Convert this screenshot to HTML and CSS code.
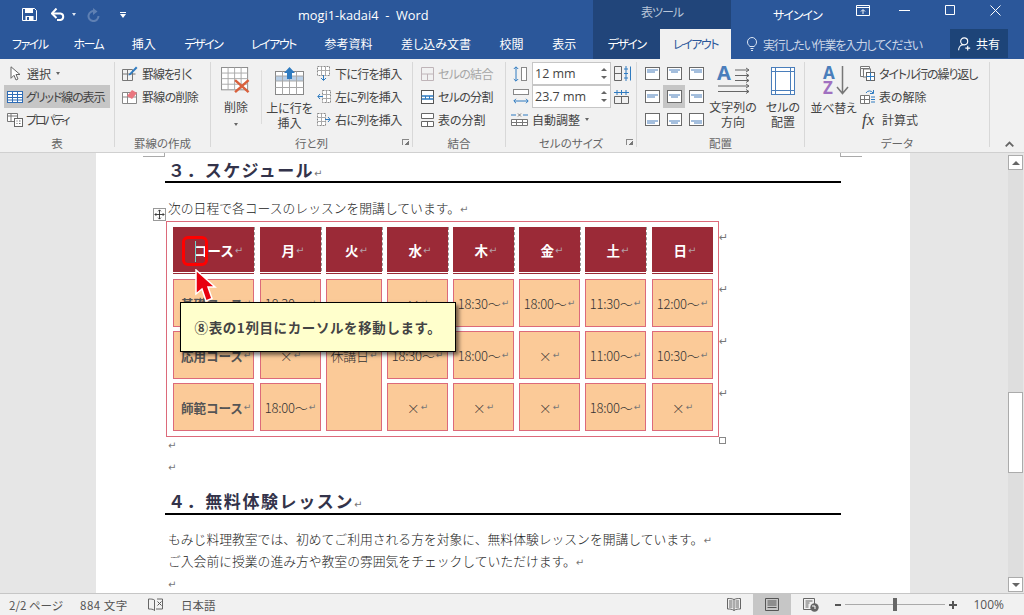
FILE: index.html
```html
<!DOCTYPE html>
<html lang="ja">
<head>
<meta charset="utf-8">
<title>mogi1-kadai4 - Word</title>
<link rel="stylesheet" href="styles.css">
</head>
<body>
<svg class="defs" width="0" height="0">
  <symbol id="al" viewBox="0 0 15 13"><rect x=".5" y=".5" width="14" height="12" fill="#fff" stroke="#6a6a6a"/><path d="M2 3h11M2 5h8" stroke="#4a7ebb" fill="none"/></symbol>
  <symbol id="ac" viewBox="0 0 15 13"><rect x=".5" y=".5" width="14" height="12" fill="#fff" stroke="#6a6a6a"/><path d="M2 3h11M4 5h7" stroke="#4a7ebb" fill="none"/></symbol>
  <symbol id="ar" viewBox="0 0 15 13"><rect x=".5" y=".5" width="14" height="12" fill="#fff" stroke="#6a6a6a"/><path d="M2 3h11M5 5h8" stroke="#4a7ebb" fill="none"/></symbol>
  <symbol id="ml" viewBox="0 0 15 13"><rect x=".5" y=".5" width="14" height="12" fill="#fff" stroke="#6a6a6a"/><path d="M2 5h11M2 7h8" stroke="#4a7ebb" fill="none"/></symbol>
  <symbol id="mc" viewBox="0 0 15 13"><rect x=".5" y=".5" width="14" height="12" fill="#fff" stroke="#6a6a6a"/><path d="M2 5h11M4 7h7" stroke="#4a7ebb" fill="none"/></symbol>
  <symbol id="mr" viewBox="0 0 15 13"><rect x=".5" y=".5" width="14" height="12" fill="#fff" stroke="#6a6a6a"/><path d="M2 5h11M5 7h8" stroke="#4a7ebb" fill="none"/></symbol>
  <symbol id="bl" viewBox="0 0 15 13"><rect x=".5" y=".5" width="14" height="12" fill="#fff" stroke="#6a6a6a"/><path d="M2 8h11M2 10h8" stroke="#4a7ebb" fill="none"/></symbol>
  <symbol id="bc" viewBox="0 0 15 13"><rect x=".5" y=".5" width="14" height="12" fill="#fff" stroke="#6a6a6a"/><path d="M2 8h11M4 10h7" stroke="#4a7ebb" fill="none"/></symbol>
  <symbol id="br" viewBox="0 0 15 13"><rect x=".5" y=".5" width="14" height="12" fill="#fff" stroke="#6a6a6a"/><path d="M2 8h11M5 10h8" stroke="#4a7ebb" fill="none"/></symbol>
</svg>

<div class="app">
  <header class="titlebar">
    <div class="qat">
      <svg class="q-save" width="15" height="13" viewBox="0 0 15 13"><path d="M.5.5h12l2 2v10H.5z" fill="none" stroke="#fff"/><path d="M3 1h8v4H3zM3.500 8h8v4.500h-8z" fill="#fff"/><path d="M5 9h2v3H5z" fill="#2b579a"/></svg>
      <svg class="q-undo" width="16" height="13" viewBox="0 0 16 13"><path d="M1 5.500h8.500a3.300 3.300 0 0 1 0 6.500H6" fill="none" stroke="#fff" stroke-width="2"/><path d="M5.500.5 1 5.500l4.500 4.500" fill="none" stroke="#fff" stroke-width="2"/></svg>
      <span class="q-arrow"></span>
      <svg class="q-redo" width="14" height="14" viewBox="0 0 14 14"><path d="M9 3.300a5 5 0 1 0 3.500 4.700" fill="none" stroke="#5f80b3" stroke-width="2"/><path d="M7 0v7l4.500-3.500z" fill="#5f80b3"/></svg>
      <svg class="q-custom" width="6" height="6" viewBox="0 0 6 6"><path d="M0 0h6v1H0zM0 2h6L3 6z" fill="#fff"/></svg>
    </div>
    <div class="doc-title">mogi1-kadai4&nbsp; - &nbsp;Word</div>
    <div class="tool-ctx">表ツール</div>
    <div class="signin">サインイン</div>
    <div class="winbtns">
      <svg width="14" height="11" viewBox="0 0 14 11"><path d="M.5.5h13v10H.5z" fill="none" stroke="#fff"/><path d="M.5 2.500h13" stroke="#fff"/><path d="M7 9V5M5 6.500 7 4.500l2 2" stroke="#fff" fill="none"/></svg>
      <svg width="11" height="11" viewBox="0 0 11 11"><path d="M0 5.500h11" stroke="#fff"/></svg>
      <svg width="10" height="10" viewBox="0 0 10 10"><path d="M.5.500h9v9h-9z" fill="none" stroke="#fff"/></svg>
      <svg width="11" height="11" viewBox="0 0 11 11"><path d="M.5.500l10 10M10.500.500l-10 10" stroke="#fff" fill="none"/></svg>
    </div>
  </header>

  <nav class="tabs">
    <span class="tab kana">ファイル</span><span class="tab kana">ホーム</span><span class="tab">挿入</span><span class="tab kana">デザイン</span><span class="tab kana">レイアウト</span><span class="tab">参考資料</span><span class="tab">差し込み文書</span><span class="tab">校閲</span><span class="tab">表示</span>
    <span class="tab kana tab-ctx">デザイン</span><span class="tab kana tab-on">レイアウト</span>
    <div class="tell">
      <svg width="10" height="14" viewBox="0 0 10 14"><path d="M3 9.500C1 8 .5 6.500.5 5a4.500 4.500 0 0 1 9 0c0 1.500-.5 3-2.500 4.500zM3.500 11.500h3M4 13.500h2" fill="none" stroke="#dce6f4"/></svg>
      <span>実行したい作業を入力してください</span>
    </div>
    <div class="share">
      <svg width="15" height="16" viewBox="0 0 17 16"><circle cx="7" cy="5" r="4" fill="none" stroke="#fff" stroke-width="1.300"/><path d="M.7 15c0-3.500 2.500-6 5-6.300M11 10v5.500M8.300 12.700h5.500" fill="none" stroke="#fff" stroke-width="1.300"/></svg>
      <span>共有</span>
    </div>
  </nav>

  <section class="ribbon">
    <div class="group g-table">
      <div class="g-body rows">
        <div class="item"><svg width="11" height="15" viewBox="0 0 11 15"><path d="M1 .8v11.500l3-3 2 4.700 2-1-2-4.500h4z" fill="#fff" stroke="#666"/></svg><span>選択</span><i class="caret"></i></div>
        <div class="item item-on"><svg width="16" height="12" viewBox="0 0 16 12"><rect x=".5" y=".5" width="15" height="11" fill="#fff" stroke="#2f6cb5"/><path d="M.5 3.500h15M.5 6.500h15M.5 9h15M5.500.5v11M10.500.5v11" stroke="#2f6cb5" fill="none"/></svg><span class="s2">グリッド線の表示</span></div>
        <div class="item"><svg width="16" height="15" viewBox="0 0 16 15"><path d="M.5 1.500h10v8H.5zM.5 4h10M4 1.500v8" fill="#fff" stroke="#777"/><rect x="7.500" y="6.500" width="8" height="8" fill="#fff" stroke="#666"/><path d="M9.500 9h1M12 9h1.500M9.500 11.500h1M12 11.500h1.500" stroke="#666"/></svg><span class="s3">プロパティ</span></div>
      </div>
      <div class="g-label">表</div>
    </div>

    <div class="group g-draw">
      <div class="g-body rows">
        <div class="item"><svg width="16" height="15" viewBox="0 0 16 15"><path d="M.5 3.500h10v11H.5zM.5 8h13M5.500 3.500v11" fill="none" stroke="#777"/><path d="M7 8l7-7.500 1.500 1.500L8.500 9 6.500 9.500z" fill="#2f7bc0"/></svg><span class="s2">罫線を引く</span></div>
        <div class="item"><svg width="16" height="15" viewBox="0 0 16 15"><path d="M.5 3.500h14v11H.5zM.5 8h14M5.500 3.500v11" fill="#fff" stroke="#888"/><path d="M5 7l5-6 5 3-5 6z" fill="#e9767f"/></svg><span class="s1">罫線の削除</span></div>
      </div>
      <div class="g-label">罫線の作成</div>
    </div>

    <div class="group g-rows">
      <div class="g-body g-rows-body">
        <div class="big b-del">
          <svg width="32" height="27" viewBox="0 0 32 29"><rect x=".5" y=".5" width="28" height="24" fill="#fff" stroke="#888"/><path d="M.5 6.500h28M.5 12.500h28M.5 18.500h28M7.500.5v24M14.500.5v24M21.500.5v24" stroke="#a8a8a8" fill="none"/><path d="M15 14l14.500 13M29.500 14 15 27" stroke="#d9603c" stroke-width="2.600" fill="none"/></svg>
          <span>削除</span><i class="caret c-big"></i>
        </div>
        <div class="vsep"></div>
        <div class="big b-ins">
          <svg width="30" height="28" viewBox="0 0 30 28"><rect x=".5" y="4.500" width="28" height="23" fill="#fff" stroke="#888"/><rect x="1" y="9" width="27" height="5" fill="#b9cfe6"/><path d="M.5 9h28M.5 14h28M.5 20.500h28M7.500 4.500v23M14.500 4.500v23M21.500 4.500v23" stroke="#a8a8a8" fill="none"/><path d="M14.500 0 20 6h-3v6h-5V6H9z" fill="#2f7bc0"/></svg>
          <span class="s0">上に行を<br>挿入</span>
        </div>
        <div class="rows r-ins">
          <div class="item"><svg width="14" height="15" viewBox="0 0 14 15"><rect x=".5" y=".5" width="12" height="9" fill="#fff" stroke="#888" stroke-dasharray="2 1"/><path d="M.5 4.500h12M4.500.5v9M8.500.5v9" stroke="#aaa"/><path d="M6.500 9v5M4 12l2.500 2.500L9 12" stroke="#2f7bc0" fill="none"/></svg><span class="s1">下に行を挿入</span></div>
          <div class="item"><svg width="14" height="15" viewBox="0 0 14 15"><rect x="5.500" y="1.500" width="8" height="12" fill="#fff" stroke="#888" stroke-dasharray="2 1"/><path d="M5.500 5.500h8M5.500 9.500h8M9.500 1.500v12" stroke="#aaa"/><path d="M6 7.500H1M3 5 .8 7.500 3 10" stroke="#2f7bc0" fill="none"/></svg><span class="s1">左に列を挿入</span></div>
          <div class="item"><svg width="14" height="15" viewBox="0 0 14 15"><rect x=".5" y="1.500" width="8" height="12" fill="#fff" stroke="#888" stroke-dasharray="2 1"/><path d="M.5 5.500h8M.5 9.500h8M4.500 1.500v12" stroke="#aaa"/><path d="M8 7.500h5M11 5l2.200 2.500L11 10" stroke="#2f7bc0" fill="none"/></svg><span class="s1">右に列を挿入</span></div>
        </div>
      </div>
      <div class="g-label">行と列</div>
      <i class="launcher"></i>
    </div>

    <div class="group g-merge">
      <div class="g-body rows">
        <div class="item off"><svg width="13" height="14" viewBox="0 0 13 14"><path d="M.5.500h12v13H.5zM.5 7h12M6.500 7v6.500" fill="none" stroke="#bfb4b8"/></svg><span class="s1">セルの結合</span></div>
        <div class="item"><svg width="13" height="14" viewBox="0 0 13 14"><rect x=".5" y=".5" width="12" height="13" fill="#fff" stroke="#555"/><path d="M.5 6h12M.5 9h12" stroke="#2f7bc0" stroke-width="1.500"/><path d="M4.500 6v3M8.500 6v3" stroke="#2f7bc0"/></svg><span class="s1">セルの分割</span></div>
        <div class="item"><svg width="13" height="14" viewBox="0 0 13 14"><path d="M.5.500h12v5H.5zM.5 8.500h12v5H.5zM6.500 8.500v5" fill="#fff" stroke="#666"/></svg><span>表の分割</span></div>
      </div>
      <div class="g-label">結合</div>
    </div>

    <div class="group g-size">
      <div class="g-body rows">
        <div class="size-row">
          <svg width="16" height="16" viewBox="0 0 16 16"><path d="M3 1v14M.8 3 3 .8 5.200 3M.8 13 3 15.200 5.200 13" stroke="#2f7bc0" fill="none"/><rect x="8.500" y="1.500" width="5" height="13" fill="#fff" stroke="#888"/></svg>
          <div class="spin"><span>12 mm</span><b class="sp"><i class="up"></i><i class="dn"></i></b></div>
          <svg width="17" height="15" viewBox="0 0 17 15"><path d="M.5.500h7v14h-7zM.5 7.500h7" fill="none" stroke="#666"/><path d="M12 0v15M10 3h4M10 7.500h4M10 12h4M16.500.5v14" fill="none" stroke="#2f7bc0"/></svg>
        </div>
        <div class="size-row">
          <svg width="16" height="16" viewBox="0 0 16 16"><rect x=".5" y=".5" width="15" height="5" fill="#fff" stroke="#888"/><path d="M1 12h14M3 9.800.8 12 3 14.200M13 9.800 15.200 12 13 14.200" stroke="#2f7bc0" fill="none"/></svg>
          <div class="spin"><span>23.7 mm</span><b class="sp"><i class="up"></i><i class="dn"></i></b></div>
          <svg width="17" height="15" viewBox="0 0 17 15"><path d="M.5 7.500h14v7H.5zM7.500 7.500v7" fill="none" stroke="#666"/><path d="M0 3.500h15M3 1v5M7.500 1v5M12 1v5" fill="none" stroke="#2f7bc0"/></svg>
        </div>
        <div class="item i-auto"><svg width="17" height="13" viewBox="0 0 17 13"><path d="M0 2h5M12 2h5" stroke="#2f7bc0"/><path d="M7 .5l3 3M10 .5l-3 3" stroke="#777"/><path d="M.5 6.500h16v6H.5zM.5 9.500h16M5.500 6.500v6M11.500 6.500v6" fill="#fff" stroke="#777"/></svg><span>自動調整</span><i class="caret"></i></div>
      </div>
      <div class="g-label">セルのサイズ</div>
      <i class="launcher"></i>
    </div>

    <div class="group g-align">
      <div class="g-body g-align-body">
        <div class="aligns">
          <span class="al"><svg width="15" height="13"><use href="#al"/></svg></span><span class="al"><svg width="15" height="13"><use href="#ac"/></svg></span><span class="al"><svg width="15" height="13"><use href="#ar"/></svg></span>
          <span class="al"><svg width="15" height="13"><use href="#ml"/></svg></span><span class="al al-on"><svg width="15" height="13"><use href="#mc"/></svg></span><span class="al"><svg width="15" height="13"><use href="#mr"/></svg></span>
          <span class="al"><svg width="15" height="13"><use href="#bl"/></svg></span><span class="al"><svg width="15" height="13"><use href="#bc"/></svg></span><span class="al"><svg width="15" height="13"><use href="#br"/></svg></span>
        </div>
        <div class="big b-dir">
          <svg class="has-text" width="33" height="28" viewBox="0 0 33 28"><text x="0" y="15" class="svg-a">A</text><path d="M18 5h14M18 10.500h14M18 15.500h14M1 21h31M1 26.500h31M29 3l3 2-3 2M29 8.500l3 2-3 2M29 13.500l3 2-3 2M29 19l3 2-3 2M29 24.500l3 2-3 2" stroke="#666" fill="none"/></svg>
          <span>文字列の<br>方向</span>
        </div>
        <div class="big b-cell">
          <svg width="24" height="28" viewBox="0 0 24 28"><rect x=".5" y=".5" width="23" height="27" fill="#fff" stroke="#4a7ebb"/><path d="M4.500.5v27M19.500.5v27M.5 4.500h23M.5 23.500h23" stroke="#4a7ebb" fill="none"/></svg>
          <span>セルの<br>配置</span>
        </div>
      </div>
      <div class="g-label">配置</div>
    </div>

    <div class="group g-data">
      <div class="g-body g-data-body">
        <div class="big b-sort">
          <svg class="has-text" width="25" height="29" viewBox="0 0 25 29"><text x="0" y="13" class="svg-az1">A</text><text x="0" y="28" class="svg-az2">Z</text><path d="M19.500 0v27M14 21l5.500 6.500L25 21" stroke="#777" stroke-width="1.500" fill="none"/></svg>
          <span>並べ替え</span>
        </div>
        <div class="rows r-data">
          <div class="item"><svg width="15" height="15" viewBox="0 0 15 15"><path d="M.5.500h9v2h-9zM.5 2.500v8h3" fill="#fff" stroke="#777"/><rect x="3.500" y="3" width="7" height="8" fill="#fff" stroke="#777"/><rect x="6.500" y="6.500" width="8" height="8" fill="#fff" stroke="#666"/><path d="M6.500 10.500h8M10.500 6.500v8" stroke="#2f7bc0"/></svg><span class="s2">タイトル行の繰り返し</span></div>
          <div class="item"><svg width="15" height="15" viewBox="0 0 15 15"><path d="M.5 6.500h9v8h-9zM.5 10.500h9M4.500 6.500v8" fill="#fff" stroke="#777"/><path d="M11 8h4M11 10.500h4M11 13h4M6 4a4 4 0 0 1 7 0M13.500 1v3.500H10" stroke="#2f7bc0" fill="none"/></svg><span>表の解除</span></div>
          <div class="item"><span class="fx">fx</span><span>計算式</span></div>
        </div>
      </div>
      <div class="g-label">データ</div>
    </div>

    <svg class="collapse" width="9" height="6" viewBox="0 0 9 6"><path d="M.7 5.300 4.500 1.500l3.800 3.800" fill="none" stroke="#666" stroke-width="1.800"/></svg>
  </section>

  <main class="workspace">
    <div class="doc-scroll">
      <article class="page">
        <i class="crop crop-l"></i><i class="crop crop-r"></i>
        <h2 class="h">３．スケジュール<i class="rt">↵</i></h2>
        <p class="para first">次の日程で各コースのレッスンを開講しています。<i class="rt">↵</i></p>

        <div class="tbl-wrap">
          <div class="move"><svg width="11" height="11" viewBox="0 0 12 12"><path d="M6 1v10M1 6h10M4.500 2.500 6 1l1.500 1.500M4.500 9.500 6 11l1.500-1.500M2.500 4.500 1 6l1.500 1.500M9.500 4.500 11 6 9.500 7.500" stroke="#333" fill="none"/></svg></div>
          <div class="tbl">
            <div class="th c1">コース<i class="rt">↵</i></div>
            <div class="th">月<i class="rt">↵</i></div>
            <div class="th">火<i class="rt">↵</i></div>
            <div class="th">水<i class="rt">↵</i></div>
            <div class="th">木<i class="rt">↵</i></div>
            <div class="th">金<i class="rt">↵</i></div>
            <div class="th c7">土<i class="rt">↵</i></div>
            <div class="th last">日<i class="rt">↵</i></div>

            <div class="td c1 name">基礎コース<i class="rt">↵</i></div>
            <div class="td">18:30～<i class="rt">↵</i></div>
            <div class="td off">休講日<i class="rt">↵</i></div>
            <div class="td">×<i class="rt">↵</i></div>
            <div class="td">18:30～<i class="rt">↵</i></div>
            <div class="td">18:00～<i class="rt">↵</i></div>
            <div class="td c7">11:30～<i class="rt">↵</i></div>
            <div class="td">12:00～<i class="rt">↵</i></div>

            <div class="td c1 name">応用コース<i class="rt">↵</i></div>
            <div class="td">×<i class="rt">↵</i></div>
            <div class="td">18:30～<i class="rt">↵</i></div>
            <div class="td">18:00～<i class="rt">↵</i></div>
            <div class="td">×<i class="rt">↵</i></div>
            <div class="td c7">11:00～<i class="rt">↵</i></div>
            <div class="td">10:30～<i class="rt">↵</i></div>

            <div class="td c1 name">師範コース<i class="rt">↵</i></div>
            <div class="td">18:00～<i class="rt">↵</i></div>
            <div class="td">×<i class="rt">↵</i></div>
            <div class="td">×<i class="rt">↵</i></div>
            <div class="td">×<i class="rt">↵</i></div>
            <div class="td c7">18:00～<i class="rt">↵</i></div>
            <div class="td">×<i class="rt">↵</i></div>
          </div>
          <div class="row-ends"><i class="rt">↵</i><i class="rt">↵</i><i class="rt">↵</i><i class="rt">↵</i></div>
          <i class="resize"></i>
          <i class="caret-line"></i>
          <div class="hl-box"></div>
          <svg class="pointer" width="22" height="34" viewBox="0 0 22 34"><path d="M1 1v24l6-5 4 12 6-2.500-4-11.500h7z" fill="#e8000f" stroke="#fff" stroke-width="1.500"/></svg>
          <div class="callout">⑧表の1列目にカーソルを移動します。</div>
        </div>

        <p class="para blank"><i class="rt">↵</i></p>
        <p class="para"><i class="rt">↵</i></p>
        <h2 class="h h4">４．無料体験レッスン<i class="rt">↵</i></h2>
        <p class="para first2">もみじ料理教室では、初めてご利用される方を対象に、無料体験レッスンを開講しています。<i class="rt">↵</i></p>
        <p class="para">ご入会前に授業の進み方や教室の雰囲気をチェックしていただけます。<i class="rt">↵</i></p>
        <p class="para"><i class="rt">↵</i></p>
      </article>
    </div>
    <aside class="scrollbar">
      <div class="sb-btn"><i class="tri-up"></i></div>
      <div class="sb-track"><div class="sb-thumb"></div></div>
      <div class="sb-btn"><i class="tri-dn"></i></div>
    </aside>
  </main>

  <footer class="status">
    <span class="st-pg">2/2 ページ</span>
    <span class="st-wc">884 文字</span>
    <svg class="st-book" width="15" height="14" viewBox="0 0 15 14"><path d="M6.500 2C5 1 3 1 .5 1v10c2.500 0 4.500 0 6 1.500zM6.500 2v10.500" fill="none" stroke="#666"/><path d="M9 1h5.500v10H8" fill="none" stroke="#666"/><path d="M9.500 3.500l4 4M13.500 3.500l-4 4" stroke="#555"/></svg>
    <span class="st-lang">日本語</span>
    <div class="st-right">
      <svg class="v-read" width="14" height="13" viewBox="0 0 14 13"><path d="M7 1.500C5 .5 3 .5.500.500v10.500c2.500 0 4.500 0 6.500 1.500 2-1.500 4-1.500 6.500-1.500V.5C11 .5 9 .5 7 1.500zM7 1.500v11M2 3h3.500M2 5h3.500M2 7h3.500M2 9h3.500M8.500 3H12M8.500 5H12M8.500 7H12M8.500 9H12" fill="none" stroke="#666"/></svg>
      <div class="v-print"><svg width="14" height="13" viewBox="0 0 14 13"><path d="M.5.500h13v12H.5zM2.500 3h9M2.500 5h9M2.500 7h9M2.500 9.500h9" fill="none" stroke="#555"/></svg></div>
      <svg class="v-web" width="16" height="14" viewBox="0 0 16 14"><path d="M.5.500h11v11H.5zM2.500 3h7M2.500 5h4M2.500 7h3M2.500 9h3" fill="none" stroke="#666"/><circle cx="11.500" cy="9.500" r="4.200" fill="#666"/><path d="M9 8h3v3" stroke="#fff" fill="none"/></svg>
      <div class="zoom">
        <i class="z-minus"></i>
        <div class="z-track"><i class="z-thumb"></i></div>
        <i class="z-plus"></i>
      </div>
      <span class="z-val">100%</span>
    </div>
  </footer>
</div>
</body>
</html>
```

FILE: styles.css
```css
* { box-sizing: border-box; }
html, body { margin: 0; padding: 0; width: 1024px; height: 615px; overflow: hidden; }
body {
  font-family: "Noto Sans CJK JP", "Noto Sans", sans-serif;
  font-size: 12px;
  color: #444;
  background: #f1f1f1;
}
i { font-style: normal; }
svg { display: block; flex: none; }
.has-text { overflow: visible; }
.defs { position: absolute; }
.app { display: flex; flex-direction: column; height: 615px; }
.s1 { letter-spacing: -.7px; }
.s2 { letter-spacing: -1.100px; }
.s3 { letter-spacing: -2.200px; }

/* title bar */
.titlebar {
  height: 29px; background: #2b579a; color: #fff;
  display: flex; align-items: center; flex: none;
}
.qat { display: flex; align-items: center; width: 298px; padding-left: 22px; height: 22px; flex: none; }
.q-undo { margin-left: 14px; }
.q-arrow { width: 0; height: 0; margin-left: 5px; border: 2.500px solid transparent; border-top: 3px solid #dfe7f3; border-bottom: 0; }
.q-redo { margin-left: 10px; }
.q-custom { margin-left: 20px; }
.doc-title { width: 295px; font-family: "Open Sans", sans-serif; font-size: 12.800px; line-height: 20px; flex: none; }
.tool-ctx {
  width: 138px; height: 29px; flex: none; background: #21457a; color: #b8c5d8;
  text-align: center; line-height: 24px; font-feature-settings: "palt"; font-size: 12px; letter-spacing: -1px;
}
.signin { margin-left: 42px; width: 83px; font-size: 12px; font-feature-settings: "palt"; line-height: 20px; letter-spacing: -1px; }
.winbtns { display: flex; align-items: center; margin-top: -9px; }
.winbtns svg:nth-child(1) { margin-right: 29px; margin-left: 0; }
.winbtns svg:nth-child(2) { margin-right: 35px; }
.winbtns svg:nth-child(3) { margin-right: 35px; }

/* tabs */
.tabs { height: 30px; background: #2b579a; display: flex; flex: none; color: #fff; }
.tab {
  padding: 0 14.300px; line-height: 30px; font-size: 12px; white-space: nowrap;
  font-feature-settings: "palt"; flex: none;
}
.tab:first-child { padding-left: 12px; padding-right: 11.500px; }
.kana { letter-spacing: -1.500px; }
.tab-ctx { background: #21457a; margin-left: auto; width: 67px; padding: 0; text-align: center; }
.tab-on { background: #f1f1f1; color: #2b579a; width: 71px; padding: 0; text-align: center; }
.tell {
  display: flex; align-items: center; margin-left: 16px; gap: 6px; width: 203px;
  color: #cbd6e7; font-size: 12px; font-feature-settings: "palt"; white-space: nowrap; flex: none; letter-spacing: -1.250px;
}
.share {
  width: 58px; height: 29px; background: #1d4478; margin-right: 16px; flex: none;
  display: flex; align-items: center; justify-content: center; gap: 3px; font-size: 12px;
}

/* ribbon */
.ribbon {
  height: 94px; background: #f1f1f1; border-bottom: 1px solid #d0d0d0;
  display: flex; flex: none; position: relative; padding-top: 3px;
  font-feature-settings: "palt"; white-space: nowrap;
}
.group { display: flex; flex-direction: column; height: 85px; border-right: 1px solid #d8d8d8; position: relative; flex: none; }
.g-body { height: 70px; flex: none; }
.g-label { text-align: center; color: #666; font-size: 11.500px; line-height: 15px; height: 11px; margin-top: 4px; }
.g-table { width: 115px; }
.g-draw { width: 96px; }
.g-rows { width: 202px; }
.g-merge { width: 93px; }
.g-size { width: 131px; }
.g-align { width: 168px; }
.g-data { width: 185px; border-right: 1px solid #d8d8d8; }
.rows { display: flex; flex-direction: column; }
.item { height: 23px; display: flex; align-items: center; font-size: 12px; flex: none; }
.item svg { margin-right: 4px; }
.g-table .rows { padding: 0 4px; }
.g-table .item { padding-left: 6px; width: 106px; }
.g-table .item:nth-child(1) svg { margin-right: 6px; }
.g-table .item:nth-child(2),
.g-table .item:nth-child(3) { padding-left: 3px; }
.g-table .item:nth-child(2) svg,
.g-table .item:nth-child(3) svg { margin-right: 3px; }
.item-on { background: #c6c6c6; }
.g-draw .rows { padding-left: 7px; }
.off { color: #a6a6a6; }
.caret { display: block; width: 0; height: 0; margin-left: 5px; border: 2.500px solid transparent; border-top: 3px solid #666; border-bottom: 0; }
.c-big { margin: 9px 0 0; }
.g-rows-body { display: flex; }
.big { display: flex; flex-direction: column; align-items: center; line-height: 15px; font-size: 12px; text-align: center; flex: none; }
.b-del { width: 50px; padding-top: 5px; margin-right: 0; }
.b-del span { margin-top: 5px; }
.vsep { width: 1px; height: 54px; background: #dcdcdc; margin-top: 8px; flex: none; }
.b-ins { width: 55px; padding-top: 5px; }
.b-ins span { margin-top: 5px; }
.r-ins { padding-left: 0; }
.g-merge .rows { padding-left: 8px; }
.launcher {
  position: absolute; right: 3px; bottom: 2px; width: 7px; height: 6px;
  border-left: 1px solid #888; border-top: 1px solid #888;
  background: linear-gradient(135deg, transparent 62%, #777 62%);
}

/* size */
.g-size .rows { padding-left: 7px; }
.size-row { height: 23px; display: flex; align-items: center; flex: none; }
.spin {
  width: 79px; height: 23px; margin: 0 3px; background: #fff; border: 1px solid #c6c6c6;
  display: flex; align-items: center; justify-content: space-between; padding: 0 3px 0 2px;
  font-size: 12.500px; font-family: "Open Sans", sans-serif; color: #444;
}
.sp { display: flex; flex-direction: column; gap: 5px; }
.up, .dn { display: block; width: 0; height: 0; border: 3px solid transparent; }
.up { border-bottom: 3px solid #666; border-top: 0; }
.dn { border-top: 3px solid #666; border-bottom: 0; }
.i-auto { margin-left: -2px; }
.i-auto svg { margin-right: 4px; }

/* align */
.g-align-body { display: flex; padding-left: 4px; }
.aligns { display: grid; grid-template-columns: repeat(3, 22px); grid-auto-rows: 23px; width: 66px; flex: none; }
.al { display: flex; align-items: center; justify-content: center; }
.al-on { background: #c6c6c6; }
.b-dir { width: 48px; margin-left: 2px; padding-top: 3px; }
.b-dir span { margin-top: 6px; }
.b-cell { width: 44px; margin-left: 4px; padding-top: 5px; }
.b-cell span { margin-top: 4px; }
.svg-a { font: 700 20px "Noto Sans", sans-serif; fill: #4a7ebb; }
.svg-az1 { font: 700 17px "Noto Sans", sans-serif; fill: #4a7ebb; }
.svg-az2 { font: 700 17px "Noto Sans", sans-serif; fill: #a070c0; }

/* data */
.g-data-body { display: flex; padding-left: 4px; }
.b-sort { width: 47px; padding-top: 4px; margin-left: 1px; margin-right: 3px; }
.b-sort svg { margin-left: 3px; }
.b-sort span { margin-top: 5px; letter-spacing: -.3px; }
.fx { font-family: "Liberation Serif", serif; font-style: italic; font-size: 17px; width: 17px; margin-left: 2px; margin-right: 3px; color: #444; line-height: 18px; }
.collapse { position: absolute; left: 1005px; top: 82px; }

/* workspace */
.workspace { flex: 1; display: flex; min-height: 0; background: #e6e6e6; }
.doc-scroll { flex: 1; overflow: hidden; padding-left: 96px; }
.page {
  width: 814px; height: 440px; background: #fff; padding: 5px 0 0 69px; position: relative;
  font-feature-settings: normal;
}
.crop { position: absolute; top: 0; height: 4px; width: 22px; border-bottom: 1px solid #aaa; }
.crop-l { left: 47px; border-right: 1px solid #aaa; width: 22px; }
.crop-r { left: 744px; border-left: 1px solid #aaa; }
.rt { font-family: "DejaVu Sans", sans-serif; color: #777; font-size: 10px; font-weight: 400; letter-spacing: 0; }
.h {
  margin: 0; width: 676px; height: 25px; border-bottom: 2px solid #000; color: #33334a;
  font-size: 17px; font-weight: 700; line-height: 24px; padding-left: 3px; letter-spacing: 1.400px;
}
.h4 { height: 27px; line-height: 26px; margin-top: 11px; letter-spacing: 1.600px; }
.para {
  margin: 0; height: 22px; line-height: 22px; font-size: 12.800px; color: #222;
  font-weight: 300; padding-left: 3px; white-space: nowrap;
}
.first { margin-top: 14px; height: 24px; }
.blank { margin-top: -4px; }
.first2 { margin-top: 13px; }

/* table */
.tbl-wrap { position: relative; width: 553px; margin-left: 1px; height: 216px; }
.tbl {
  display: grid; width: 553px; height: 216px; border: 1px solid #dc6a7a; padding: 5px 5px 5px 6px;
  grid-template-columns: 82px 61px 56px 61px 61px 61px 62px 61px;
  grid-template-rows: 48px 48px 48px 48px;
  column-gap: 5px; row-gap: 4px;
}
.th {
  background: #9b2a37; color: #fff; font-weight: 700; font-size: 13.500px; position: relative;
  display: flex; align-items: center; justify-content: center; padding-left: 5px;
  margin-bottom: 1px; border-bottom: 1px solid #9b2a37; box-shadow: inset 0 -1px 0 #fff;
}
.th::after {
  content: ""; position: absolute; left: 100%; top: 0; bottom: 2px; width: 5px;
  background: #fff; border-left: 1px dashed #999; border-right: 1px dashed #999;
}
.th.last::after { display: none; }
.th.c1, .th.c7, .td.c1, .td.c7 { margin-right: 1px; }
.th.c1::after, .th.c7::after { width: 6px; }
.th .rt { color: #b5a0a8; margin-left: 1px; }
.th.c1 { justify-content: flex-start; padding-left: 21px; }
.td {
  background: #fbca98; border: 1px solid #dc6a7a; display: flex; align-items: center; justify-content: center;
  font-size: 13px; color: #333; font-weight: 300; white-space: nowrap; letter-spacing: -.2px;
}
.td .rt { margin-left: 1px; font-size: 9px; }
.td.name { font-weight: 700; font-size: 12.600px; justify-content: flex-start; padding-left: 7px; color: #555; letter-spacing: -.1px; }
.td.off { grid-row: 2 / span 3; grid-column: 3; }
.row-ends { position: absolute; left: 553px; top: 9px; display: flex; flex-direction: column; }
.row-ends .rt { height: 52px; line-height: 16px; display: block; font-size: 11px; }
.move {
  position: absolute; left: -13px; top: -13px; width: 13px; height: 13px;
  background: #fff; border: 1px solid #999; display: flex; align-items: center; justify-content: center;
}
.resize { position: absolute; left: 553px; top: 216px; width: 7px; height: 7px; background: #fff; border: 1px solid #888; }
.caret-line { position: absolute; left: 29px; top: 20px; width: 1px; height: 21px; background: #6fd0c8; }
.hl-box { position: absolute; left: 16px; top: 15px; width: 26px; height: 30px; border: 3px solid #f00; border-radius: 6px; }
.pointer { position: absolute; left: 29px; top: 48px; }
.callout {
  position: absolute; left: 14px; top: 81px; width: 276px; height: 50px;
  background: #ffffcc; border: 1px solid #000; box-shadow: 3px 3px 4px rgba(0, 0, 0, .55);
  display: flex; align-items: center; justify-content: center;
  font-weight: 700; font-size: 13.500px; letter-spacing: .6px; color: #444; white-space: nowrap;
}

/* scrollbar */
.scrollbar { width: 17px; flex: none; display: flex; flex-direction: column; padding-top: 2px; padding-bottom: 1px; background: #e6e6e6; padding-left: 1px; }
.sb-btn { width: 15px; height: 15px; background: #fff; border: 1px solid #ababab; display: flex; align-items: center; justify-content: center; flex: none; }
.sb-track { flex: 1; background: #dedede; padding-top: 222px; width: 15px; }
.sb-thumb { width: 15px; height: 81px; background: #fff; border: 1px solid #ababab; }
.tri-up, .tri-dn { display: block; width: 0; height: 0; border: 4px solid transparent; }
.tri-up { border-bottom: 4px solid #666; border-top: 0; }
.tri-dn { border-top: 4px solid #666; border-bottom: 0; }

/* status bar */
.status {
  height: 22px; flex: none; background: #f1f1f1; border-top: 1px solid #c6c6c6;
  display: flex; align-items: center; color: #555; font-size: 11.500px; font-feature-settings: "palt"; white-space: nowrap;
}
.st-pg { margin-left: 9px; width: 71px; }
.st-wc { width: 68px; letter-spacing: .5px; }
.st-book { margin-right: 18px; }
.st-lang { width: 60px; }
.st-right { display: flex; align-items: center; margin-left: auto; height: 21px; }
.v-read { margin-right: 12px; }
.v-print { width: 38px; height: 21px; background: #c6c6c6; display: flex; align-items: center; justify-content: center; margin-right: 12px; }
.v-web { margin-right: 16px; }
.zoom { display: flex; align-items: center; width: 122px; }
.z-minus { width: 6px; height: 2px; background: #555; display: block; }
.z-track { width: 100px; height: 1px; background: #aaa; margin: 0 4px; position: relative; }
.z-thumb { position: absolute; left: 48px; top: -6px; width: 4px; height: 13px; background: #666; }
.z-plus { width: 8px; height: 8px; display: block; background: linear-gradient(#555, #555) center / 8px 2px no-repeat, linear-gradient(#555, #555) center / 2px 8px no-repeat; }
.z-val { margin-left: 16px; margin-right: 20px; font-family: "Open Sans", sans-serif; font-size: 12px; color: #555; }
```
